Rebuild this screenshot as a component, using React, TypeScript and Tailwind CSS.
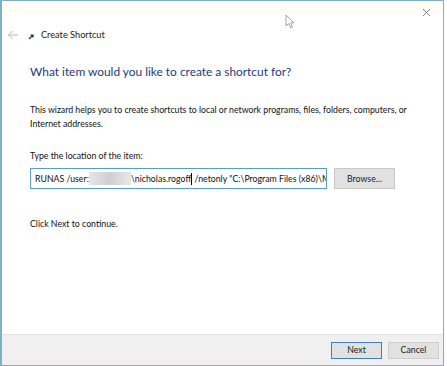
export default function App() {
  const font = { fontFamily: 'Lato, "Noto Sans", sans-serif' }
  return (
    <div className="w-[447px] h-[366px] bg-white overflow-hidden" style={font}>
      <div className="relative w-[444px] h-[366px] border border-[#7fb0c8] border-l-2 flex flex-col bg-white">
        {/* title strip */}
        <div className="h-[12px] bg-[#fffdf6] flex justify-end pr-[12px] pt-[4px]">
          <svg width="9" height="9" viewBox="0 0 9 9" className="mt-[3px]">
            <path d="M1 1L8 8M8 1L1 8" stroke="#777" strokeWidth="0.9" />
          </svg>
        </div>
        <div className="flex items-center h-[44px] pl-[5px]">
          <svg width="12" height="10" viewBox="0 0 12 10">
            <path d="M11 5H1.5M5.5 1L1.5 5L5.5 9" stroke="#b8b8b8" strokeWidth="1" fill="none" />
          </svg>
          <svg width="6" height="6" viewBox="0 0 6 6" className="ml-[9px] mt-[4px]">
            <path d="M1 5L5 1M2.5 1H5V3.5" stroke="#1a2a5a" strokeWidth="1.2" fill="none" />
          </svg>
          <span className="ml-[7px] text-[9.2px] text-[#222]">Create Shortcut</span>
        </div>
        <div className="pl-[28px] pr-[10px] flex flex-col">
          <h1 className="mt-[6px] text-[11.9px] text-[#1c3a7e] leading-[18px]">
            What item would you like to create a shortcut for?
          </h1>
          <p className="mt-[22px] text-[8.75px] leading-[14px] text-[#111] whitespace-nowrap">
            This wizard helps you to create shortcuts to local or network programs, files, folders, computers, or
            <br />
            Internet addresses.
          </p>
          <div className="mt-[19px] text-[8.75px] leading-[12px] text-[#111]">Type the location of the item:</div>
          <div className="flex items-center mt-[6px] gap-[7px]">
            <div className="w-[297px] h-[21px] border border-[#5b9bd5] bg-white flex items-center pl-[4px] overflow-hidden whitespace-nowrap text-[8.75px] text-[#111]">
              <span>RUNAS /user:</span>
              <span className="inline-block shrink-0 w-[42px] h-[13px] bg-gradient-to-r from-[#e6e6e6] via-[#cfcfcf] to-[#e8e8e8]" />
              <span>\nicholas.rogoff</span>
              <span className="inline-block shrink-0 w-px h-[12px] bg-black" />
              <span>&nbsp;/netonly "C:\Program Files (x86)\M</span>
            </div>
            <button className="w-[61px] h-[21px] bg-[#e1e1e1] border border-[#c8c8c8] text-[8.75px] text-[#222]">
              Browse...
            </button>
          </div>
          <div className="mt-[29px] text-[8.75px] leading-[12px] text-[#111]">Click Next to continue.</div>
        </div>
        <div className="flex-1" />
        <div className="h-[31px] bg-[#f0f0f0] border-t border-[#e4e4e4] flex items-center justify-end gap-[6px] pr-[4px]">
          <button className="w-[51px] h-[17px] bg-[#e1e1e1] border border-[#3f7fc0] text-[8.75px] text-[#222]">Next</button>
          <button className="w-[51px] h-[17px] bg-[#e1e1e1] border border-[#cfcfcf] text-[8.75px] text-[#222]">Cancel</button>
        </div>
        {/* mouse pointer */}
        <svg width="10" height="15" viewBox="0 0 10 15" className="absolute left-[283px] top-[13px]">
          <path d="M1 1V12L3.8 9.5L5.8 14L7.5 13.2L5.6 8.8H9L1 1Z" fill="white" stroke="#999" strokeWidth="0.9" />
        </svg>
      </div>
    </div>
  )
}
